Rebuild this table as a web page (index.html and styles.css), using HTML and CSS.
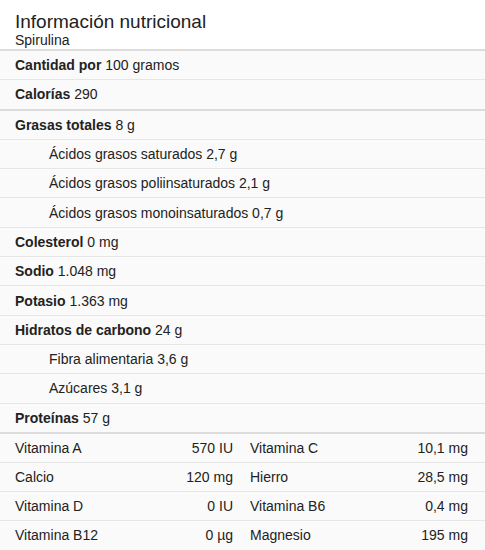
FILE: index.html
```html
<!DOCTYPE html>
<html lang="es">
<head>
    <meta charset="UTF-8">
    <meta name="viewport" content="width=device-width, initial-scale=1.0">
    <title>Información nutricional</title>
    <link rel="stylesheet" href="styles.css">
</head>
<body>
    <div class="card">
        <div class="header">
            <h1>Información nutricional</h1>
            <div class="subtitle">Spirulina</div>
        </div>

        <div class="facts">
            <div class="row"><b>Cantidad por</b>&nbsp;100 gramos</div>
            <div class="row thick"><b>Calorías</b>&nbsp;290</div>

            <div class="row"><b>Grasas totales</b>&nbsp;8 g</div>
            <div class="row sub">Ácidos grasos saturados 2,7 g</div>
            <div class="row sub">Ácidos grasos poliinsaturados 2,1 g</div>
            <div class="row sub">Ácidos grasos monoinsaturados 0,7 g</div>
            <div class="row"><b>Colesterol</b>&nbsp;0 mg</div>
            <div class="row"><b>Sodio</b>&nbsp;1.048 mg</div>
            <div class="row"><b>Potasio</b>&nbsp;1.363 mg</div>
            <div class="row"><b>Hidratos de carbono</b>&nbsp;24 g</div>
            <div class="row sub">Fibra alimentaria 3,6 g</div>
            <div class="row sub">Azúcares 3,1 g</div>
            <div class="row thick"><b>Proteínas</b>&nbsp;57 g</div>

            <div class="vrow">
                <div class="vit"><span>Vitamina A</span><span>570 IU</span></div>
                <div class="vit"><span>Vitamina C</span><span>10,1 mg</span></div>
            </div>
            <div class="vrow">
                <div class="vit"><span>Calcio</span><span>120 mg</span></div>
                <div class="vit"><span>Hierro</span><span>28,5 mg</span></div>
            </div>
            <div class="vrow">
                <div class="vit"><span>Vitamina D</span><span>0 IU</span></div>
                <div class="vit"><span>Vitamina B6</span><span>0,4 mg</span></div>
            </div>
            <div class="vrow last">
                <div class="vit"><span>Vitamina B12</span><span>0 µg</span></div>
                <div class="vit"><span>Magnesio</span><span>195 mg</span></div>
            </div>
        </div>
    </div>
</body>
</html>
```
FILE: styles.css
```css
* {
    margin: 0;
    padding: 0;
    box-sizing: border-box;
}

body {
    font-family: "Liberation Sans", Arial, sans-serif;
    color: #222;
    background: #fff;
}

.card {
    width: 485px;
}

.header {
    padding: 10px 15px 2px;
    background: #fff;
}

.header h1 {
    font-size: 19px;
    font-weight: normal;
    line-height: 23px;
}

.subtitle {
    font-size: 14px;
    line-height: 14px;
}

.facts {
    background: #fafafa;
    border-top: 2px solid #dcdcdc;
    font-size: 14px;
}

.row {
    display: flex;
    align-items: center;
    height: 29.3px;
    padding: 0 15px;
    border-bottom: 1px solid #e6e6e6;
}

.row.thick {
    height: 30.3px;
    border-bottom: 2px solid #dcdcdc;
}

.row.sub {
    padding-left: 49px;
}

.vrow {
    display: flex;
    gap: 17px;
    height: 29px;
    padding: 0 17px 0 15px;
    border-bottom: 1px solid #e6e6e6;
}

.vrow.last {
    border-bottom: none;
}

.vit {
    flex: 1;
    display: flex;
    justify-content: space-between;
    align-items: center;
}
```
